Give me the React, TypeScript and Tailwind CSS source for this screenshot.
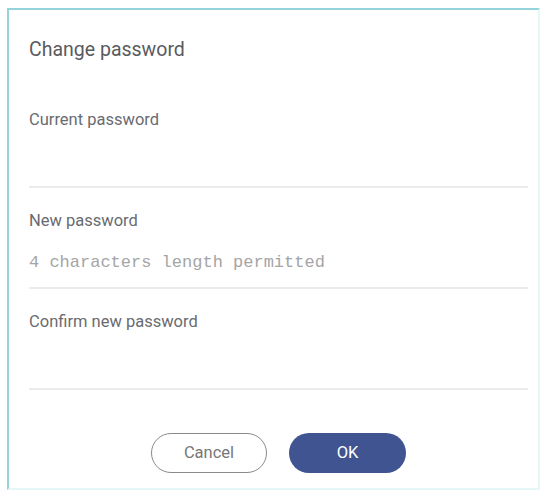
const Field = ({ label, hint }: { label: string; hint?: string }) => {
  return (
    <div className="flex flex-col border-b-2 border-[#ebebeb] pt-[23px]">
      <div className="text-[16.5px] leading-[20px] text-[#696b70]">{label}</div>
      <div className="h-[56px] pt-[22px]">
        {hint && (
          <div className="font-['Liberation_Mono',monospace] text-[17px] leading-[20px] text-[#a5a5a5]">{hint}</div>
        )}
      </div>
    </div>
  );
};

export default function App() {
  return (
    <div className="h-[492px] w-[542px] bg-white pl-[7px] pt-[8px] font-['Roboto',sans-serif]">
      <div className="flex h-[482px] w-[533px] flex-col border-2 border-[#93d4da] border-b-[#e6f7f8] border-r-[#e6f7f8] bg-white pl-[20px] pr-[10px]">
        <div className="pt-[28px] text-[19.5px] leading-[24px] text-[#595b60]">Change password</div>
        <div className="mt-[25px]">
          <Field label="Current password" />
          <Field label="New password" hint="4 characters length permitted" />
          <Field label="Confirm new password" />
        </div>
        <div className="mt-[43px] flex justify-center gap-[22px]">
          <button className="h-[40px] w-[116px] rounded-full border-[1.5px] border-[#8a8a8a] bg-white text-[16.5px] text-[#777777]">
            Cancel
          </button>
          <button className="h-[40px] w-[117px] rounded-full bg-[#3f5490] text-[16.5px] text-white">OK</button>
        </div>
      </div>
    </div>
  );
}
